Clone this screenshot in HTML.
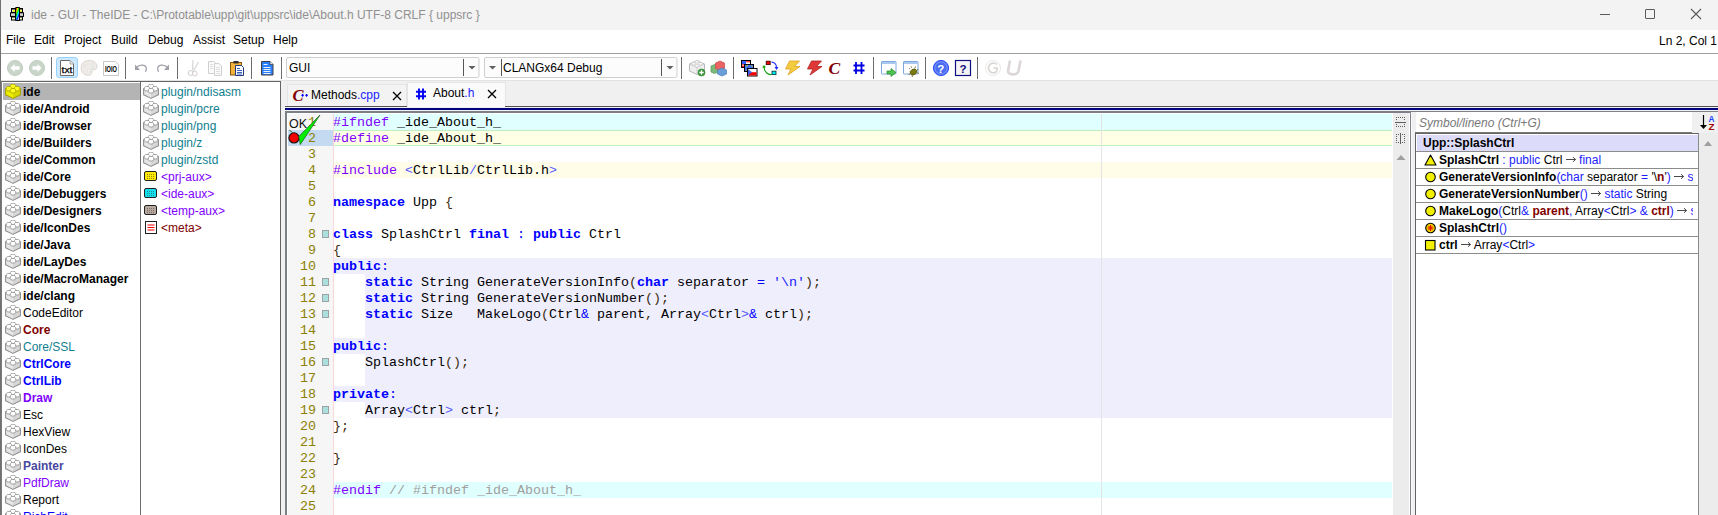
<!DOCTYPE html>
<html><head><meta charset="utf-8">
<style>
*{margin:0;padding:0;box-sizing:border-box}
html,body{width:1718px;height:515px;overflow:hidden;background:#f0f0f0;position:relative;font-family:"Liberation Sans",sans-serif;font-size:12px;color:#000}
.a{position:absolute}
.t{position:absolute;white-space:pre;line-height:16px}
#title{left:0;top:0;width:1718px;height:30px;background:#f3f3f3}
#menu{left:0;top:30px;width:1718px;height:24px;background:#fff;border-bottom:1px solid #a0a0a0}
#tb{left:0;top:54px;width:1718px;height:27px;background:#fff;border-bottom:1px solid #e3e3e3}
.sep{position:absolute;top:57px;width:1px;height:22px;background:#6e6e6e}
.mi{position:absolute;top:32px;color:#000;font-size:12px;line-height:16px}
#lp{left:0;top:81px;width:281px;height:434px;background:#fff;border-top:1px solid #646464;border-right:1px solid #646464}
.li{position:absolute;height:17px;line-height:17px;white-space:pre;font-size:12px;margin-top:1px}
.code{position:absolute;margin-top:1px;margin-left:-1px;font-family:"Liberation Mono",monospace;font-size:13.33px;line-height:16px;white-space:pre}
.ln{position:absolute;margin-top:1px;left:288px;width:28px;text-align:right;font-family:"Liberation Mono",monospace;font-size:13.33px;line-height:16px;color:#8c8000}
.kw{color:#0000ff;font-weight:bold}
.pp{color:#8000ff}
.br{color:#3a2a10}
.cm{color:#a0a0a0}
.op{color:#0000ff}
.str{color:#1818ff}
.ang{color:#5a5aff}
.mk{position:absolute;left:322px;width:7px;height:8px;background:#a8e0e0;border:1px solid #a0a0a0}
</style></head><body>
<div class="a" style="left:0;top:0;width:1px;height:515px;background:#707070;z-index:50"></div>
<div class="a" style="left:1px;top:81px;width:1px;height:434px;background:#7a7a7a;z-index:50"></div>
<div id="title" class="a">
  <svg class="a" style="left:6px;top:4px" width="24" height="22" viewBox="6 4 24 22">
<defs><linearGradient id="rb" x1="0" y1="0" x2="0.6" y2="1"><stop offset="0" stop-color="#ff0000"/><stop offset="0.25" stop-color="#ffff00"/><stop offset="0.45" stop-color="#00e000"/><stop offset="0.65" stop-color="#00ffff"/><stop offset="0.85" stop-color="#0000ff"/><stop offset="1" stop-color="#c0c0ff"/></linearGradient></defs>
<rect x="11" y="8" width="12" height="12.5" fill="#000"/>
<rect x="10" y="12.3" width="14" height="4.6" fill="#000"/>
<rect x="12" y="9.5" width="3" height="2.3" fill="#f8f8c0"/><rect x="19.5" y="9.5" width="2.5" height="2.3" fill="#f8f8c0"/>
<rect x="13" y="10" width="2" height="1.5" fill="#ffff00"/><rect x="20" y="10" width="1.5" height="1.5" fill="#ffff00"/>
<rect x="11" y="13.3" width="4" height="2.6" fill="#d4d4d4"/><rect x="19.5" y="13.3" width="3.5" height="2.6" fill="#d4d4d4"/>
<rect x="12" y="17.5" width="3" height="2" fill="#f8f8c0"/><rect x="19.5" y="17.5" width="2.5" height="2" fill="#f8f8c0"/>
<rect x="15.2" y="7" width="4.8" height="14" rx="0.8" fill="#000"/>
<rect x="16.2" y="8" width="2.8" height="12" fill="url(#rb)"/>
</svg>
  <div class="t" style="left:31px;top:7px;color:#909090;font-size:12px;line-height:16px">ide - GUI - TheIDE - C:\Prototable\upp\git\uppsrc\ide\About.h UTF-8 CRLF { uppsrc }</div>
  <div class="a" style="left:1600px;top:14px;width:10px;height:1px;background:#5a5a5a"></div>
  <div class="a" style="left:1645px;top:9px;width:10px;height:10px;border:1px solid #5a5a5a;border-radius:1px"></div>
  <svg class="a" style="left:1690px;top:8px" width="12" height="12" viewBox="0 0 12 12"><path d="M1 1L11 11M11 1L1 11" stroke="#5a5a5a" stroke-width="1.1"/></svg>
</div>
<div id="menu" class="a">
</div>
<div class="mi" style="left:6px">File</div>
<div class="mi" style="left:34px">Edit</div>
<div class="mi" style="left:64px">Project</div>
<div class="mi" style="left:111px">Build</div>
<div class="mi" style="left:148px">Debug</div>
<div class="mi" style="left:193px">Assist</div>
<div class="mi" style="left:233px">Setup</div>
<div class="mi" style="left:273px">Help</div>
<div class="mi" style="left:1659px;top:33px;white-space:pre">Ln 2, Col 1</div>

<div id="tb" class="a"></div>
<svg class="a" style="left:0;top:54px" width="1030" height="27" viewBox="0 54 1030 27">
<!-- back/forward -->
<circle cx="15" cy="68" r="7.6" fill="#c9d5c9" stroke="#b9c6b9" stroke-width="0.8"/>
<path d="M10.5 68 L14.5 64 L14.5 66.3 L19.5 66.3 L19.5 69.7 L14.5 69.7 L14.5 72 Z" fill="#fff"/>
<circle cx="37" cy="68" r="7.6" fill="#c9d5c9" stroke="#b9c6b9" stroke-width="0.8"/>
<path d="M41.5 68 L37.5 64 L37.5 66.3 L32.5 66.3 L32.5 69.7 L37.5 69.7 L37.5 72 Z" fill="#fff"/>
<!-- seps -->
<g fill="#6c6c6c">
<rect x="51" y="57" width="1" height="22"/><rect x="125" y="57" width="1" height="22"/>
<rect x="177" y="57" width="1" height="22"/><rect x="251" y="57" width="1" height="22"/>
<rect x="281" y="57" width="1" height="22"/><rect x="681" y="57" width="1" height="22"/>
<rect x="733" y="57" width="1" height="22"/><rect x="873" y="57" width="1" height="22"/>
<rect x="925" y="57" width="1" height="22"/><rect x="977" y="57" width="1" height="22"/>
</g>
<!-- txt highlighted -->
<rect x="56.5" y="57.5" width="21" height="20" rx="2.5" fill="#cce8ff" stroke="#99d1ff"/>
<path d="M60.5 60.5 H70 L73.5 64 V75.5 H60.5 Z" fill="#fff" stroke="#6a6a6a"/>
<path d="M70 60.5 V64 H73.5" fill="#e8e8e8" stroke="#9a9a9a" stroke-width="0.8"/><text x="61.5" y="73" font-family="Liberation Sans" font-size="9" fill="#000" textLength="11" lengthAdjust="spacingAndGlyphs" stroke="#000" stroke-width="0.25">txt</text>
<!-- palette faded -->
<path d="M89 60.5 C94.5 60.5 97.5 63.5 97 67.5 C96.5 70 94 69.5 92.5 70 C91 70.8 92.5 73 91 74.5 C89.5 76 85 75.5 82.8 73 C80.5 70.5 80.5 64 84 62 C85.5 61 87 60.5 89 60.5 Z" fill="#eeebe8" stroke="#dcd8d4"/>
<circle cx="84.5" cy="66" r="1.2" fill="none" stroke="#eadcdc" stroke-width="0.6"/>
<circle cx="88" cy="63.5" r="1.2" fill="none" stroke="#ebe8d8" stroke-width="0.6"/>
<circle cx="92.5" cy="64.5" r="1.2" fill="none" stroke="#d8e8dc" stroke-width="0.6"/>
<circle cx="92.5" cy="68" r="1.2" fill="none" stroke="#d4e0ea" stroke-width="0.6"/>
<circle cx="88.5" cy="70.5" r="1.3" fill="#fff" stroke="#d0ccc8" stroke-width="0.5"/>
<!-- 1010 doc -->
<path d="M103.5 61.5 H115.5 L118.5 64.5 V75.5 H103.5 Z" fill="#fff" stroke="#c8c8c8"/>
<text x="105" y="71.5" font-family="Liberation Sans" font-size="8.5" font-weight="bold" fill="#000" textLength="12" lengthAdjust="spacingAndGlyphs">IOIO</text>
<!-- undo/redo -->
<path d="M136.5 67.5 C139 64.5 146 64 146.3 68.5 C146.5 70.5 145.5 71.2 145.5 71.8" fill="none" stroke="#9fa0a8" stroke-width="1.3"/>
<path d="M135 64.5 L135 70 L140 70 Z" fill="#9fa0a8"/>
<path d="M167.5 67.5 C165 64.5 158 64 157.7 68.5 C157.5 70.5 158.5 71.2 158.5 71.8" fill="none" stroke="#9fa0a8" stroke-width="1.3"/>
<path d="M169 64.5 L169 70 L164 70 Z" fill="#9fa0a8"/>
<!-- scissors faded -->
<path d="M193 60 L192.5 70.5 M198.5 62 L193.5 70.5" stroke="#d8d8d8" stroke-width="1.3"/>
<ellipse cx="190.5" cy="73" rx="2.3" ry="2.5" fill="none" stroke="#d6cccc" stroke-width="1"/>
<ellipse cx="194.8" cy="73.5" rx="2.3" ry="2.5" fill="none" stroke="#d6cccc" stroke-width="1"/>
<!-- copy faded -->
<path d="M208.5 61.5 H214 L215.5 63 V73.5 H208.5 Z" fill="#fafafa" stroke="#d0d0d0"/>
<path d="M214.5 63.5 H219 L221.5 66 V75.5 H214.5 Z" fill="#fafafa" stroke="#d0d0d0"/>
<g stroke="#d8d8d8" stroke-width="0.8"><path d="M210 64.5h3M210 66.5h3M210 68.5h3M216 67.5h4M216 69.5h4M216 71.5h4M216 73.5h4"/></g>
<!-- paste -->
<rect x="230.5" y="62.5" width="11" height="12.5" fill="#f2b23c" stroke="#8a5a10"/>
<rect x="233.5" y="61" width="5" height="2.5" fill="#303030"/>
<path d="M235.5 65.5 H241.5 L243.5 67.5 V75.5 H235.5 Z" fill="#fff" stroke="#203880"/>
<g stroke="#2050b0" stroke-width="0.9"><path d="M237 68.5h3M237 70.5h5M237 72.5h5M237 74h5"/></g>
<!-- blue doc -->
<path d="M261.5 61.5 H270 L273 64.5 V75 H261.5 Z" fill="#2a7fff" stroke="#404040"/>
<path d="M270 61.5 V64.5 H273" fill="#fff" stroke="#404040" stroke-width="0.8"/>
<g stroke="#fff" stroke-width="0.9"><path d="M263.5 64.5h4M263.5 67.5h7M263.5 69.5h7M263.5 71.5h7M263.5 73.5h7"/></g>

<!-- combo GUI -->
<rect x="286.5" y="57.5" width="192.5" height="20" rx="1.5" fill="#fcfcfc" stroke="#cfcfcf"/>
<rect x="463" y="59" width="1" height="17" fill="#555"/>
<path d="M468.5 66 L475.5 66 L472 69.5 Z" fill="#606060"/>
<!-- combo CLANG -->
<rect x="484.5" y="57.5" width="192.5" height="20" rx="1.5" fill="#fcfcfc" stroke="#cfcfcf"/>
<rect x="501" y="59" width="1" height="17" fill="#555"/>
<path d="M489 66 L496 66 L492.5 69.5 Z" fill="#606060"/>
<rect x="661" y="59" width="1" height="17" fill="#555"/>
<path d="M666.5 66 L673.5 66 L670 69.5 Z" fill="#606060"/>
</svg>
<div class="t" style="left:289px;top:60px;font-size:12px">GUI</div>
<div class="t" style="left:503px;top:60px;font-size:12px">CLANGx64 Debug</div>


<svg class="a" style="left:680px;top:54px" width="350" height="27" viewBox="680 54 350 27">
<!-- gray brick + plus -->
<path d="M689.5 64 L697 60.5 L704.5 64 L704.5 71 L697 74.5 L689.5 71 Z" fill="#efefef" stroke="#b8b8b8"/>
<path d="M689.5 64 L697 67.5 L704.5 64 M697 67.5 V74.5" fill="none" stroke="#c8c8c8" stroke-width="0.8"/>
<ellipse cx="697" cy="61.8" rx="2" ry="1.2" fill="#fff" stroke="#c0c0c0" stroke-width="0.6"/>
<ellipse cx="693.5" cy="63.8" rx="2" ry="1.2" fill="#fff" stroke="#c0c0c0" stroke-width="0.6"/>
<ellipse cx="700.5" cy="63.8" rx="2" ry="1.2" fill="#fff" stroke="#c0c0c0" stroke-width="0.6"/>
<ellipse cx="697" cy="65.8" rx="2" ry="1.2" fill="#fff" stroke="#c0c0c0" stroke-width="0.6"/>
<circle cx="701.5" cy="72.5" r="3.5" fill="#3a9a3a" stroke="#2a7a2a" stroke-width="0.6"/>
<path d="M699.3 72.5h4.4M701.5 70.3v4.4" stroke="#fff" stroke-width="1.3"/>
<!-- colored bricks -->
<path d="M711 66 L714.5 64.5 L718 66 L718 72 L714.5 73.5 L711 72 Z" fill="#7cba7c" stroke="#5a9a5a" stroke-width="0.7"/>
<path d="M715.5 63 L720 61 L724.5 63 L724.5 68.5 L720 70.5 L715.5 68.5 Z" fill="#ea6464" stroke="#c84848" stroke-width="0.7"/>
<path d="M717.5 70 L722 68 L726.5 70 L726.5 74 L722 76 L717.5 74 Z" fill="#6a9ed8" stroke="#4a7eb8" stroke-width="0.7"/>
<!-- flags -->
<rect x="741.5" y="60.5" width="9" height="7" fill="#fff" stroke="#000"/>
<rect x="742" y="61" width="4" height="3" fill="#3060ff"/>
<path d="M746 61.8h4M742 64.8h8M742 66.5h8" stroke="#f00000" stroke-width="1"/>
<rect x="744.5" y="64.5" width="9" height="7" fill="#4070f0" stroke="#000"/>
<path d="M746 66 L748 65.5 M751 65.5 L752.5 66.5 M746 70 L747.5 70.8 M752 70.5 L753 69.5" stroke="#e0e000" stroke-width="0.8"/>
<rect x="747.5" y="68.5" width="9.5" height="7.5" fill="#fff" stroke="#000"/>
<rect x="748" y="72.2" width="8.5" height="3.3" fill="#f00000"/>
<path d="M748 69 L752 72.2 L748 75.5 Z" fill="#4060e0"/>
<!-- sync -->
<path d="M771.5 62.2 C774.5 62 776.5 64.5 776.5 67.5" fill="none" stroke="#2030ff" stroke-width="1.2"/>
<path d="M774.5 67 L778.5 67 L776.5 70 Z" fill="#2030ff"/>
<path d="M771.5 74.5 C768 74.8 764 72 764 67" fill="none" stroke="#10a010" stroke-width="1.2"/>
<path d="M762 67.5 L766 67.5 L764 65 Z" fill="#10a010"/>
<rect x="766.2" y="61.2" width="4" height="3.4" fill="#f00000" stroke="#300000" stroke-width="0.8"/>
<rect x="772" y="71.2" width="4" height="3.4" fill="#00f0f0" stroke="#003030" stroke-width="0.8"/>
<!-- yellow lightning -->
<path d="M789.5 61 L799.5 61 L794.5 66.5 L800 66.5 L788 75 L791 69 L785.5 69 Z" fill="#f4cc40" stroke="#e0a020" stroke-width="0.8"/>
<!-- red lightning -->
<path d="M811.5 61 L821.5 61 L816.5 66.5 L822 66.5 L810 75 L813 69 L807.5 69 Z" fill="#e03838" stroke="#b02020" stroke-width="0.8"/>
<!-- C -->
<text x="828.5" y="73.6" font-family="Liberation Serif" font-style="italic" font-weight="bold" font-size="17.5" fill="#800000">C</text>
<!-- # -->
<path d="M856 62v12M861.5 62v12M853.5 65.5h11M853.5 70.5h11" stroke="#0000e0" stroke-width="1.8"/>
<!-- window + arrow -->
<rect x="881.5" y="61.5" width="14.5" height="12.5" rx="0.5" fill="#fff" stroke="#80a8e0"/>
<rect x="882" y="62" width="13.5" height="2" fill="#a8c8f0"/>
<path d="M887 71h4v-2.5l5 4 -5 4v-2.5h-4z" fill="#50c050" stroke="#209020" stroke-width="0.7"/>
<!-- window + bug -->
<rect x="903.5" y="61.5" width="14.5" height="12.5" rx="0.5" fill="#fff" stroke="#80a8e0"/>
<rect x="904" y="62" width="13.5" height="2" fill="#a8c8f0"/>
<ellipse cx="913.5" cy="72" rx="3.5" ry="2.8" transform="rotate(-30 913.5 72)" fill="#7a7a10" stroke="#4a4a00" stroke-width="0.6"/>
<path d="M910 69l-1-1M911.5 67.8l-0.5-1.5M915 68l0.5-1.5M917 70l1.5-0.5M917.5 73l1.5 0.5M912 75.5l0.5 1.5M910 74l-1.5 0.5" stroke="#4a4a00" stroke-width="0.7"/>
<!-- help circle -->
<circle cx="941" cy="68" r="7.6" fill="#4a6cf0" stroke="#1a3cff" stroke-width="0.9"/>
<circle cx="941" cy="68" r="6.2" fill="none" stroke="#fff" stroke-width="0.5" opacity="0.6"/>
<text x="937.2" y="72.5" font-family="Liberation Sans" font-weight="bold" font-size="11.5" fill="#fff">?</text>
<!-- help square -->
<rect x="955.5" y="60.5" width="15" height="15" fill="#f4f4f4" stroke="#101080" stroke-width="1.2"/>
<text x="959.5" y="73" font-family="Liberation Sans" font-weight="bold" font-size="11.5" fill="#101080">?</text>
<!-- G faded -->
<circle cx="993" cy="68" r="7.5" fill="#fff" stroke="#e8e8e8"/>
<path d="M997 64.5 C994.5 62 989 62.5 988.5 67.5 C988.3 72 993 74 996 72 L997 70 L997 68 L993.5 68" fill="none" stroke="#d8d4d0" stroke-width="1.6"/>
<!-- U faded -->
<path d="M1010 60.5 L1008 71 C1007.5 75 1017 76 1018.5 71 L1020.5 60.5" fill="none" stroke="#ddd6d6" stroke-width="2.6"/>
</svg>

<div id="lp" class="a"></div>
<svg width="0" height="0" style="position:absolute"><defs>
<symbol id="brk" viewBox="0 0 16 15">
<path d="M0.6 4.8 L8 1.4 L15.4 4.8 L15.4 10.8 L8 14.4 L0.6 10.8 Z" fill="var(--f1)"/>
<path d="M8 8.6 L15.4 4.8 L15.4 10.8 L8 14.4 Z" fill="var(--f3)"/>
<path d="M0.6 4.8 L8 1.4 L15.4 4.8 L15.4 10.8 L8 14.4 L0.6 10.8 Z" fill="none" stroke="var(--s)" stroke-width="1.05" stroke-linejoin="round"/>
<g stroke="var(--s)" stroke-width="0.75">
<path d="M5.3 1.6 v2 a2.7 1.3 0 0 0 5.4 0 v-2 a2.7 1.3 0 0 0 -5.4 0 Z" fill="var(--st)"/>
<path d="M1.3 3.8 v2 a2.7 1.3 0 0 0 5.4 0 v-2 a2.7 1.3 0 0 0 -5.4 0 Z" fill="var(--st)"/>
<path d="M9.3 3.8 v2 a2.7 1.3 0 0 0 5.4 0 v-2 a2.7 1.3 0 0 0 -5.4 0 Z" fill="var(--st)"/>
<path d="M5.3 5.8 v2 a2.7 1.3 0 0 0 5.4 0 v-2 a2.7 1.3 0 0 0 -5.4 0 Z" fill="var(--st)"/>
</g>
<g fill="var(--st)"><ellipse cx="8" cy="1.6" rx="2.3" ry="0.9"/><ellipse cx="4" cy="3.8" rx="2.3" ry="0.9"/><ellipse cx="12" cy="3.8" rx="2.3" ry="0.9"/><ellipse cx="8" cy="5.8" rx="2.3" ry="0.9"/></g>
</symbol></defs></svg>
<div class="a" style="left:3px;top:83px;width:137px;height:17px;background:#b4b4b4"></div>
<div class="a" style="left:140px;top:82px;width:1px;height:433px;background:#6e6e6e"></div>
<svg class="a" style="left:5px;top:84px;--f1:#eeee00;--f2:#f6f600;--f3:#d8d800;--s:#a8a000;--s2:#c8c000;--st:#fbfb20" width="16" height="15"><use href="#brk"/></svg>
<div class="li" style="left:23px;top:83px;color:#000;font-weight:bold">ide</div>
<svg class="a" style="left:5px;top:101px;--f1:#e6e6e6;--f2:#f4f4f4;--f3:#d6d6d6;--s:#8c8c8c;--s2:#c4c4c4;--st:#fdfdfd" width="16" height="15"><use href="#brk"/></svg>
<div class="li" style="left:23px;top:100px;color:#000;font-weight:bold">ide/Android</div>
<svg class="a" style="left:5px;top:118px;--f1:#e6e6e6;--f2:#f4f4f4;--f3:#d6d6d6;--s:#8c8c8c;--s2:#c4c4c4;--st:#fdfdfd" width="16" height="15"><use href="#brk"/></svg>
<div class="li" style="left:23px;top:117px;color:#000;font-weight:bold">ide/Browser</div>
<svg class="a" style="left:5px;top:135px;--f1:#e6e6e6;--f2:#f4f4f4;--f3:#d6d6d6;--s:#8c8c8c;--s2:#c4c4c4;--st:#fdfdfd" width="16" height="15"><use href="#brk"/></svg>
<div class="li" style="left:23px;top:134px;color:#000;font-weight:bold">ide/Builders</div>
<svg class="a" style="left:5px;top:152px;--f1:#e6e6e6;--f2:#f4f4f4;--f3:#d6d6d6;--s:#8c8c8c;--s2:#c4c4c4;--st:#fdfdfd" width="16" height="15"><use href="#brk"/></svg>
<div class="li" style="left:23px;top:151px;color:#000;font-weight:bold">ide/Common</div>
<svg class="a" style="left:5px;top:169px;--f1:#e6e6e6;--f2:#f4f4f4;--f3:#d6d6d6;--s:#8c8c8c;--s2:#c4c4c4;--st:#fdfdfd" width="16" height="15"><use href="#brk"/></svg>
<div class="li" style="left:23px;top:168px;color:#000;font-weight:bold">ide/Core</div>
<svg class="a" style="left:5px;top:186px;--f1:#e6e6e6;--f2:#f4f4f4;--f3:#d6d6d6;--s:#8c8c8c;--s2:#c4c4c4;--st:#fdfdfd" width="16" height="15"><use href="#brk"/></svg>
<div class="li" style="left:23px;top:185px;color:#000;font-weight:bold">ide/Debuggers</div>
<svg class="a" style="left:5px;top:203px;--f1:#e6e6e6;--f2:#f4f4f4;--f3:#d6d6d6;--s:#8c8c8c;--s2:#c4c4c4;--st:#fdfdfd" width="16" height="15"><use href="#brk"/></svg>
<div class="li" style="left:23px;top:202px;color:#000;font-weight:bold">ide/Designers</div>
<svg class="a" style="left:5px;top:220px;--f1:#e6e6e6;--f2:#f4f4f4;--f3:#d6d6d6;--s:#8c8c8c;--s2:#c4c4c4;--st:#fdfdfd" width="16" height="15"><use href="#brk"/></svg>
<div class="li" style="left:23px;top:219px;color:#000;font-weight:bold">ide/IconDes</div>
<svg class="a" style="left:5px;top:237px;--f1:#e6e6e6;--f2:#f4f4f4;--f3:#d6d6d6;--s:#8c8c8c;--s2:#c4c4c4;--st:#fdfdfd" width="16" height="15"><use href="#brk"/></svg>
<div class="li" style="left:23px;top:236px;color:#000;font-weight:bold">ide/Java</div>
<svg class="a" style="left:5px;top:254px;--f1:#e6e6e6;--f2:#f4f4f4;--f3:#d6d6d6;--s:#8c8c8c;--s2:#c4c4c4;--st:#fdfdfd" width="16" height="15"><use href="#brk"/></svg>
<div class="li" style="left:23px;top:253px;color:#000;font-weight:bold">ide/LayDes</div>
<svg class="a" style="left:5px;top:271px;--f1:#e6e6e6;--f2:#f4f4f4;--f3:#d6d6d6;--s:#8c8c8c;--s2:#c4c4c4;--st:#fdfdfd" width="16" height="15"><use href="#brk"/></svg>
<div class="li" style="left:23px;top:270px;color:#000;font-weight:bold">ide/MacroManager</div>
<svg class="a" style="left:5px;top:288px;--f1:#e6e6e6;--f2:#f4f4f4;--f3:#d6d6d6;--s:#8c8c8c;--s2:#c4c4c4;--st:#fdfdfd" width="16" height="15"><use href="#brk"/></svg>
<div class="li" style="left:23px;top:287px;color:#000;font-weight:bold">ide/clang</div>
<svg class="a" style="left:5px;top:305px;--f1:#e6e6e6;--f2:#f4f4f4;--f3:#d6d6d6;--s:#8c8c8c;--s2:#c4c4c4;--st:#fdfdfd" width="16" height="15"><use href="#brk"/></svg>
<div class="li" style="left:23px;top:304px;color:#000;font-weight:normal">CodeEditor</div>
<svg class="a" style="left:5px;top:322px;--f1:#e6e6e6;--f2:#f4f4f4;--f3:#d6d6d6;--s:#8c8c8c;--s2:#c4c4c4;--st:#fdfdfd" width="16" height="15"><use href="#brk"/></svg>
<div class="li" style="left:23px;top:321px;color:#800000;font-weight:bold">Core</div>
<svg class="a" style="left:5px;top:339px;--f1:#e6e6e6;--f2:#f4f4f4;--f3:#d6d6d6;--s:#8c8c8c;--s2:#c4c4c4;--st:#fdfdfd" width="16" height="15"><use href="#brk"/></svg>
<div class="li" style="left:23px;top:338px;color:#108090;font-weight:normal">Core/SSL</div>
<svg class="a" style="left:5px;top:356px;--f1:#e6e6e6;--f2:#f4f4f4;--f3:#d6d6d6;--s:#8c8c8c;--s2:#c4c4c4;--st:#fdfdfd" width="16" height="15"><use href="#brk"/></svg>
<div class="li" style="left:23px;top:355px;color:#0000ff;font-weight:bold">CtrlCore</div>
<svg class="a" style="left:5px;top:373px;--f1:#e6e6e6;--f2:#f4f4f4;--f3:#d6d6d6;--s:#8c8c8c;--s2:#c4c4c4;--st:#fdfdfd" width="16" height="15"><use href="#brk"/></svg>
<div class="li" style="left:23px;top:372px;color:#0000ff;font-weight:bold">CtrlLib</div>
<svg class="a" style="left:5px;top:390px;--f1:#e6e6e6;--f2:#f4f4f4;--f3:#d6d6d6;--s:#8c8c8c;--s2:#c4c4c4;--st:#fdfdfd" width="16" height="15"><use href="#brk"/></svg>
<div class="li" style="left:23px;top:389px;color:#8000ff;font-weight:bold">Draw</div>
<svg class="a" style="left:5px;top:407px;--f1:#e6e6e6;--f2:#f4f4f4;--f3:#d6d6d6;--s:#8c8c8c;--s2:#c4c4c4;--st:#fdfdfd" width="16" height="15"><use href="#brk"/></svg>
<div class="li" style="left:23px;top:406px;color:#000;font-weight:normal">Esc</div>
<svg class="a" style="left:5px;top:424px;--f1:#e6e6e6;--f2:#f4f4f4;--f3:#d6d6d6;--s:#8c8c8c;--s2:#c4c4c4;--st:#fdfdfd" width="16" height="15"><use href="#brk"/></svg>
<div class="li" style="left:23px;top:423px;color:#000;font-weight:normal">HexView</div>
<svg class="a" style="left:5px;top:441px;--f1:#e6e6e6;--f2:#f4f4f4;--f3:#d6d6d6;--s:#8c8c8c;--s2:#c4c4c4;--st:#fdfdfd" width="16" height="15"><use href="#brk"/></svg>
<div class="li" style="left:23px;top:440px;color:#000;font-weight:normal">IconDes</div>
<svg class="a" style="left:5px;top:458px;--f1:#e6e6e6;--f2:#f4f4f4;--f3:#d6d6d6;--s:#8c8c8c;--s2:#c4c4c4;--st:#fdfdfd" width="16" height="15"><use href="#brk"/></svg>
<div class="li" style="left:23px;top:457px;color:#4848a0;font-weight:bold">Painter</div>
<svg class="a" style="left:5px;top:475px;--f1:#e6e6e6;--f2:#f4f4f4;--f3:#d6d6d6;--s:#8c8c8c;--s2:#c4c4c4;--st:#fdfdfd" width="16" height="15"><use href="#brk"/></svg>
<div class="li" style="left:23px;top:474px;color:#8000ff;font-weight:normal">PdfDraw</div>
<svg class="a" style="left:5px;top:492px;--f1:#e6e6e6;--f2:#f4f4f4;--f3:#d6d6d6;--s:#8c8c8c;--s2:#c4c4c4;--st:#fdfdfd" width="16" height="15"><use href="#brk"/></svg>
<div class="li" style="left:23px;top:491px;color:#000;font-weight:normal">Report</div>
<svg class="a" style="left:5px;top:509px;--f1:#e6e6e6;--f2:#f4f4f4;--f3:#d6d6d6;--s:#8c8c8c;--s2:#c4c4c4;--st:#fdfdfd" width="16" height="15"><use href="#brk"/></svg>
<div class="li" style="left:23px;top:508px;color:#0000ff;font-weight:normal">RichEdit</div>
<svg class="a" style="left:143px;top:84px;--f1:#e6e6e6;--f2:#f4f4f4;--f3:#d6d6d6;--s:#8c8c8c;--s2:#c4c4c4;--st:#fdfdfd" width="16" height="15"><use href="#brk"/></svg>
<div class="li" style="left:161px;top:83px;color:#108090">plugin/ndisasm</div>
<svg class="a" style="left:143px;top:101px;--f1:#e6e6e6;--f2:#f4f4f4;--f3:#d6d6d6;--s:#8c8c8c;--s2:#c4c4c4;--st:#fdfdfd" width="16" height="15"><use href="#brk"/></svg>
<div class="li" style="left:161px;top:100px;color:#108090">plugin/pcre</div>
<svg class="a" style="left:143px;top:118px;--f1:#e6e6e6;--f2:#f4f4f4;--f3:#d6d6d6;--s:#8c8c8c;--s2:#c4c4c4;--st:#fdfdfd" width="16" height="15"><use href="#brk"/></svg>
<div class="li" style="left:161px;top:117px;color:#108090">plugin/png</div>
<svg class="a" style="left:143px;top:135px;--f1:#e6e6e6;--f2:#f4f4f4;--f3:#d6d6d6;--s:#8c8c8c;--s2:#c4c4c4;--st:#fdfdfd" width="16" height="15"><use href="#brk"/></svg>
<div class="li" style="left:161px;top:134px;color:#108090">plugin/z</div>
<svg class="a" style="left:143px;top:152px;--f1:#e6e6e6;--f2:#f4f4f4;--f3:#d6d6d6;--s:#8c8c8c;--s2:#c4c4c4;--st:#fdfdfd" width="16" height="15"><use href="#brk"/></svg>
<div class="li" style="left:161px;top:151px;color:#108090">plugin/zstd</div>
<svg class="a" style="left:144px;top:171px" width="13" height="11" viewBox="0 0 13 11"><rect x="0.5" y="0.5" width="12" height="9" rx="1.5" fill="#ffe800" stroke="#202020"/><g fill="#404040" opacity="0.55"><rect x="3" y="3" width="1" height="1"/><rect x="5" y="3" width="1" height="1"/><rect x="7" y="3" width="1" height="1"/><rect x="9" y="3" width="1" height="1"/><rect x="3" y="5" width="1" height="1"/><rect x="5" y="5" width="1" height="1"/><rect x="7" y="5" width="1" height="1"/><rect x="9" y="5" width="1" height="1"/><rect x="3" y="7" width="1" height="1"/><rect x="5" y="7" width="1" height="1"/><rect x="7" y="7" width="1" height="1"/><rect x="9" y="7" width="1" height="1"/></g></svg>
<div class="li" style="left:161px;top:168px;color:#8000ff">&lt;prj-aux&gt;</div>
<svg class="a" style="left:144px;top:188px" width="13" height="11" viewBox="0 0 13 11"><rect x="0.5" y="0.5" width="12" height="9" rx="1.5" fill="#10e0f0" stroke="#202020"/><g fill="#404040" opacity="0.55"><rect x="3" y="3" width="1" height="1"/><rect x="5" y="3" width="1" height="1"/><rect x="7" y="3" width="1" height="1"/><rect x="9" y="3" width="1" height="1"/><rect x="3" y="5" width="1" height="1"/><rect x="5" y="5" width="1" height="1"/><rect x="7" y="5" width="1" height="1"/><rect x="9" y="5" width="1" height="1"/><rect x="3" y="7" width="1" height="1"/><rect x="5" y="7" width="1" height="1"/><rect x="7" y="7" width="1" height="1"/><rect x="9" y="7" width="1" height="1"/></g></svg>
<div class="li" style="left:161px;top:185px;color:#8000ff">&lt;ide-aux&gt;</div>
<svg class="a" style="left:144px;top:205px" width="13" height="11" viewBox="0 0 13 11"><rect x="0.5" y="0.5" width="12" height="9" rx="1.5" fill="#b8a8a0" stroke="#202020"/><g fill="#404040" opacity="0.55"><rect x="3" y="3" width="1" height="1"/><rect x="5" y="3" width="1" height="1"/><rect x="7" y="3" width="1" height="1"/><rect x="9" y="3" width="1" height="1"/><rect x="3" y="5" width="1" height="1"/><rect x="5" y="5" width="1" height="1"/><rect x="7" y="5" width="1" height="1"/><rect x="9" y="5" width="1" height="1"/><rect x="3" y="7" width="1" height="1"/><rect x="5" y="7" width="1" height="1"/><rect x="7" y="7" width="1" height="1"/><rect x="9" y="7" width="1" height="1"/></g></svg>
<div class="li" style="left:161px;top:202px;color:#8000ff">&lt;temp-aux&gt;</div>
<svg class="a" style="left:145px;top:221px" width="12" height="13" viewBox="0 0 12 13"><rect x="0.5" y="0.5" width="11" height="12" fill="#fff" stroke="#202020"/><path d="M2.5 4h7M2.5 6.5h7M2.5 9h7" stroke="#f00000" stroke-width="1.2"/></svg>
<div class="li" style="left:161px;top:219px;color:#800000">&lt;meta&gt;</div>

<div class="a" style="left:287px;top:84px;width:120px;height:22px;background:#f3f3f3;border:1px solid #e4e4e4;border-bottom:none"></div>
<div class="a" style="left:407px;top:82px;width:99px;height:25px;background:#fafafa;border:1px solid #e4e4e4;border-bottom:none"></div>
<div class="a" style="left:285px;top:106px;width:122px;height:1px;background:#505050"></div>
<div class="a" style="left:505px;top:106px;width:1213px;height:1px;background:#505050"></div>
<div class="a" style="left:285px;top:108px;width:1433px;height:2px;background:#000080"></div>
<svg class="a" style="left:291px;top:86px" width="20" height="18" viewBox="0 0 20 18"><text x="1.5" y="14.8" font-family="Liberation Serif" font-style="italic" font-weight="bold" font-size="16.5" fill="#800000">C</text><path d="M10.2 9.3h2.8M11.6 7.9v2.8M14.2 9.3h2.8M15.6 7.9v2.8" stroke="#0000ff" stroke-width="1.1"/></svg>
<div class="t" style="left:311px;top:87px">Methods<span style="color:#2020ff">.cpp</span></div>
<svg class="a" style="left:392px;top:91px" width="10" height="10" viewBox="0 0 10 10"><path d="M1 1L9 9M9 1L1 9" stroke="#000" stroke-width="1.3"/></svg>
<svg class="a" style="left:415px;top:87px" width="12" height="14" viewBox="0 0 12 14"><path d="M4 1.5v11M8 1.5v11M1 4.8h10M1 9.2h10" stroke="#0000f0" stroke-width="1.9"/></svg>
<div class="t" style="left:433px;top:85px">About<span style="color:#2020ff">.h</span></div>
<svg class="a" style="left:487px;top:89px" width="10" height="10" viewBox="0 0 10 10"><path d="M1 1L9 9M9 1L1 9" stroke="#000" stroke-width="1.3"/></svg>
<div class="a" style="left:285px;top:111px;width:1126px;height:404px;background:#fff;border-top:2px solid #7c7f86;border-left:2px solid #7c7f86;border-right:1px solid #7c7f86"></div>
<div class="a" style="left:288px;top:114px;width:45px;height:401px;background:#f6f6f6"></div>
<div class="a" style="left:333px;top:114px;width:1px;height:401px;background:#f8d8d8"></div>
<div class="a" style="left:1393px;top:113px;width:16px;height:402px;background:#ececec"></div>
<div class="a" style="left:334px;top:114px;width:1058px;height:16px;background:#e0ffff"></div>
<div class="a" style="left:334px;top:130px;width:1058px;height:16px;background:#ffffe6"></div>
<div class="a" style="left:334px;top:130px;width:1058px;height:1px;background:#c0f0c0"></div>
<div class="a" style="left:334px;top:145px;width:1058px;height:1px;background:#c0f0c0"></div>
<div class="a" style="left:334px;top:162px;width:1058px;height:16px;background:#fffde8"></div>
<div class="a" style="left:334px;top:482px;width:1058px;height:16px;background:#e0ffff"></div>
<div class="a" style="left:334px;top:258px;width:1058px;height:16px;background:#eeeefc"></div>
<div class="a" style="left:334px;top:338px;width:1058px;height:16px;background:#eeeefc"></div>
<div class="a" style="left:334px;top:386px;width:1058px;height:16px;background:#eeeefc"></div>
<div class="a" style="left:365px;top:274px;width:1027px;height:64px;background:#eeeefc"></div>
<div class="a" style="left:365px;top:354px;width:1027px;height:32px;background:#eeeefc"></div>
<div class="a" style="left:365px;top:402px;width:1027px;height:16px;background:#eeeefc"></div>
<div class="a" style="left:288px;top:130px;width:45px;height:16px;background:#c4daf0"></div>
<div class="a" style="left:1101px;top:114px;width:1px;height:401px;background:#e4e4e4"></div>
<div class="ln" style="top:114px">1</div>
<div class="ln" style="top:130px">2</div>
<div class="ln" style="top:146px">3</div>
<div class="ln" style="top:162px">4</div>
<div class="ln" style="top:178px">5</div>
<div class="ln" style="top:194px">6</div>
<div class="ln" style="top:210px">7</div>
<div class="ln" style="top:226px">8</div>
<div class="ln" style="top:242px">9</div>
<div class="ln" style="top:258px">10</div>
<div class="ln" style="top:274px">11</div>
<div class="ln" style="top:290px">12</div>
<div class="ln" style="top:306px">13</div>
<div class="ln" style="top:322px">14</div>
<div class="ln" style="top:338px">15</div>
<div class="ln" style="top:354px">16</div>
<div class="ln" style="top:370px">17</div>
<div class="ln" style="top:386px">18</div>
<div class="ln" style="top:402px">19</div>
<div class="ln" style="top:418px">20</div>
<div class="ln" style="top:434px">21</div>
<div class="ln" style="top:450px">22</div>
<div class="ln" style="top:466px">23</div>
<div class="ln" style="top:482px">24</div>
<div class="ln" style="top:498px">25</div>
<div class="mk" style="top:230px"></div>
<div class="mk" style="top:278px"></div>
<div class="mk" style="top:294px"></div>
<div class="mk" style="top:310px"></div>
<div class="mk" style="top:358px"></div>
<div class="mk" style="top:406px"></div>
<div class="code" style="left:334px;top:114px"><span class="pp">#ifndef</span> _ide_About_h_</div>
<div class="code" style="left:334px;top:130px"><span class="pp">#define</span> _ide_About_h_</div>
<div class="code" style="left:334px;top:162px"><span class="pp">#include</span> <span class="ang">&lt;</span>CtrlLib<span class="ang">/</span>CtrlLib.h<span class="ang">&gt;</span></div>
<div class="code" style="left:334px;top:194px"><span class="kw">namespace</span> Upp <span class="br">{</span></div>
<div class="code" style="left:334px;top:226px"><span class="kw">class</span> SplashCtrl <span class="kw">final</span> <span class="op">:</span> <span class="kw">public</span> Ctrl</div>
<div class="code" style="left:334px;top:242px"><span class="br">{</span></div>
<div class="code" style="left:334px;top:258px"><span class="kw">public</span><span class="op">:</span></div>
<div class="code" style="left:334px;top:274px">    <span class="kw">static</span> String GenerateVersionInfo<span class="br">(</span><span class="kw">char</span> separator <span class="op">=</span> <span class="str">'\n'</span><span class="br">);</span></div>
<div class="code" style="left:334px;top:290px">    <span class="kw">static</span> String GenerateVersionNumber<span class="br">();</span></div>
<div class="code" style="left:334px;top:306px">    <span class="kw">static</span> Size   MakeLogo<span class="br">(</span>Ctrl<span class="op">&amp;</span> parent<span class="br">,</span> Array<span class="ang">&lt;</span>Ctrl<span class="ang">&gt;</span><span class="op">&amp;</span> ctrl<span class="br">);</span></div>
<div class="code" style="left:334px;top:338px"><span class="kw">public</span><span class="op">:</span></div>
<div class="code" style="left:334px;top:354px">    SplashCtrl<span class="br">();</span></div>
<div class="code" style="left:334px;top:386px"><span class="kw">private</span><span class="op">:</span></div>
<div class="code" style="left:334px;top:402px">    Array<span class="ang">&lt;</span>Ctrl<span class="ang">&gt;</span> ctrl<span class="br">;</span></div>
<div class="code" style="left:334px;top:418px"><span class="br">};</span></div>
<div class="code" style="left:334px;top:450px"><span class="br">}</span></div>
<div class="code" style="left:334px;top:482px"><span class="pp">#endif</span> <span class="cm">// #ifndef _ide_About_h_</span></div>
<div class="t" style="left:289px;top:116px;font-size:12.5px;color:#101010">OK</div>
<svg class="a" style="left:286px;top:112px" width="40" height="36" viewBox="286 112 40 36"><path d="M289.3 130.2 L292.5 132.5" stroke="#205020" stroke-width="0.9"/><circle cx="294" cy="137.9" r="5.1" fill="#f00000" stroke="#101010" stroke-width="1.1"/><path d="M320 115 L298.8 136.5 L300.3 144.5 Z" fill="#00ee00" stroke="#1a5a1a" stroke-width="0.7" stroke-linejoin="round"/></svg>
<svg class="a" style="left:1393px;top:113px" width="16" height="50" viewBox="1393 113 16 50"><g fill="#606060"><rect x="1396" y="117" width="1" height="1"/><rect x="1398" y="117" width="1" height="1"/><rect x="1400" y="117" width="1" height="1"/><rect x="1402" y="117" width="1" height="1"/><rect x="1404" y="117" width="1" height="1"/><rect x="1396" y="119" width="1" height="1"/><rect x="1404" y="119" width="1" height="1"/><rect x="1395" y="122" width="11" height="1"/><rect x="1396" y="124" width="1" height="1"/><rect x="1404" y="124" width="1" height="1"/><rect x="1396" y="126" width="1" height="1"/><rect x="1398" y="126" width="1" height="1"/><rect x="1400" y="126" width="1" height="1"/><rect x="1402" y="126" width="1" height="1"/><rect x="1404" y="126" width="1" height="1"/><rect x="1396" y="134" width="1" height="1"/><rect x="1396" y="136" width="1" height="1"/><rect x="1396" y="138" width="1" height="1"/><rect x="1396" y="140" width="1" height="1"/><rect x="1396" y="142" width="1" height="1"/><rect x="1398" y="134" width="1" height="1"/><rect x="1398" y="142" width="1" height="1"/><rect x="1400" y="133" width="1" height="11"/><rect x="1402" y="134" width="1" height="1"/><rect x="1402" y="142" width="1" height="1"/><rect x="1404" y="134" width="1" height="1"/><rect x="1404" y="136" width="1" height="1"/><rect x="1404" y="138" width="1" height="1"/><rect x="1404" y="140" width="1" height="1"/><rect x="1404" y="142" width="1" height="1"/></g><path d="M1396.5 160 L1401 155 L1405.5 160 Z" fill="#a0a0a0"/></svg>
<div class="a" style="left:1410px;top:111px;width:308px;height:404px;background:#f0f0f0;border-top:1px solid #80848a;border-left:1px solid #80848a"></div>
<div class="a" style="left:1411px;top:112px;width:1px;height:403px;background:#fafafa"></div>
<div class="a" style="left:1416px;top:112px;width:276px;height:20px;background:#fff;"></div>
<div class="a" style="left:1415px;top:132px;width:277px;height:1px;background:#7a7a7a;"></div>
<div class="t" style="left:1419px;top:115px;font-style:italic;color:#787878;font-size:12px">Symbol/lineno (Ctrl+G)</div>
<svg class="a" style="left:1692px;top:112px" width="26" height="21" viewBox="1692 112 26 21"><path d="M1703.5 115v11" stroke="#000" stroke-width="1.2"/><path d="M1700 125 L1707 125 L1703.5 129 Z" fill="#000"/><text x="1708.6" y="121.5" font-family="Liberation Sans" font-weight="bold" font-size="8.8" fill="#2040ff" textLength="6" lengthAdjust="spacingAndGlyphs">A</text><text x="1708.6" y="129.6" font-family="Liberation Sans" font-weight="bold" font-size="8.8" fill="#a00000" textLength="6" lengthAdjust="spacingAndGlyphs">Z</text></svg>
<div class="a" style="left:1415px;top:133px;width:284px;height:382px;background:#fff;border-top:1px solid #646464;border-left:1px solid #646464;border-right:1px solid #8a8a8a"></div>
<div class="a" style="left:1699px;top:133px;width:19px;height:382px;background:#ececec;"></div>
<svg class="a" style="left:1699px;top:133px" width="19" height="20" viewBox="1699 133 19 20"><path d="M1704 146 L1708 141 L1712 146 Z" fill="#a0a0a0"/></svg>
<div class="a" style="left:1417px;top:135px;width:281px;height:16px;background:#dcdcfa;"></div>
<div class="a" style="left:1416px;top:151px;width:282px;height:1px;background:#8c8c8c;"></div>
<div class="a" style="left:1416px;top:168px;width:282px;height:1px;background:#8c8c8c;"></div>
<div class="a" style="left:1416px;top:185px;width:282px;height:1px;background:#8c8c8c;"></div>
<div class="a" style="left:1416px;top:202px;width:282px;height:1px;background:#8c8c8c;"></div>
<div class="a" style="left:1416px;top:219px;width:282px;height:1px;background:#8c8c8c;"></div>
<div class="a" style="left:1416px;top:236px;width:282px;height:1px;background:#8c8c8c;"></div>
<div class="a" style="left:1416px;top:253px;width:282px;height:1px;background:#8c8c8c;"></div>
<div class="t" style="left:1423px;top:135px;font-weight:bold">Upp::SplashCtrl</div>
<svg class="a" style="left:1424px;top:154px" width="13" height="12" viewBox="0 0 13 12"><path d="M6.5 1 L12 11 L1 11 Z" fill="#f0f000" stroke="#000" stroke-width="1.1" stroke-linejoin="round"/></svg>
<div class="t" style="left:1439px;top:152px;width:254px;overflow:hidden"><b>SplashCtrl</b><span style="color:#2020ff"> : public</span> Ctrl <svg width="10" height="7" style="vertical-align:1px"><path d="M0 3.5h9.5M7 1.2l2.6 2.3-2.6 2.3" stroke="#4a4a4a" fill="none" stroke-width="1"/></svg> <span style="color:#2020ff">final</span></div>
<svg class="a" style="left:1424px;top:171px" width="13" height="12" viewBox="0 0 13 12"><circle cx="6.5" cy="6" r="4.8" fill="#f0f000" stroke="#000" stroke-width="1.1"/></svg>
<div class="t" style="left:1439px;top:169px;width:254px;overflow:hidden"><b>GenerateVersionInfo</b><span style="color:#2020ff">(char</span> separator <span style="color:#2020ff">=</span> '\<b style="color:#800000">n</b>'<span style="color:#2020ff">)</span> <svg width="10" height="7" style="vertical-align:1px"><path d="M0 3.5h9.5M7 1.2l2.6 2.3-2.6 2.3" stroke="#4a4a4a" fill="none" stroke-width="1"/></svg> <span style="color:#2020ff">static</span> String</div>
<svg class="a" style="left:1424px;top:188px" width="13" height="12" viewBox="0 0 13 12"><circle cx="6.5" cy="6" r="4.8" fill="#f0f000" stroke="#000" stroke-width="1.1"/></svg>
<div class="t" style="left:1439px;top:186px;width:254px;overflow:hidden"><b>GenerateVersionNumber</b><span style="color:#2020ff">()</span> <svg width="10" height="7" style="vertical-align:1px"><path d="M0 3.5h9.5M7 1.2l2.6 2.3-2.6 2.3" stroke="#4a4a4a" fill="none" stroke-width="1"/></svg> <span style="color:#2020ff">static</span> String</div>
<svg class="a" style="left:1424px;top:205px" width="13" height="12" viewBox="0 0 13 12"><circle cx="6.5" cy="6" r="4.8" fill="#f0f000" stroke="#000" stroke-width="1.1"/></svg>
<div class="t" style="left:1439px;top:203px;width:254px;overflow:hidden"><b>MakeLogo</b><span style="color:#2020ff">(</span>Ctrl<span style="color:#2020ff">&amp;</span> <b style="color:#800000">parent</b><span style="color:#2020ff">,</span> Array<span style="color:#2020ff">&lt;</span>Ctrl<span style="color:#2020ff">&gt;</span> <span style="color:#2020ff">&amp;</span> <b style="color:#800000">ctrl</b><span style="color:#2020ff">)</span> <svg width="10" height="7" style="vertical-align:1px"><path d="M0 3.5h9.5M7 1.2l2.6 2.3-2.6 2.3" stroke="#4a4a4a" fill="none" stroke-width="1"/></svg> <span style="color:#2020ff">static</span> Size</div>
<svg class="a" style="left:1424px;top:222px" width="13" height="12" viewBox="0 0 13 12"><circle cx="6.5" cy="6" r="4.8" fill="#f0d000" stroke="#000" stroke-width="1.1"/><path d="M6.5 3v6M3.5 6h6M4.4 3.9l4.2 4.2M8.6 3.9l-4.2 4.2" stroke="#e00000" stroke-width="0.9"/></svg>
<div class="t" style="left:1439px;top:220px;width:254px;overflow:hidden"><b>SplashCtrl</b><span style="color:#2020ff">()</span></div>
<svg class="a" style="left:1424px;top:239px" width="13" height="12" viewBox="0 0 13 12"><rect x="1.5" y="1.5" width="9.5" height="9.5" fill="#f0f000" stroke="#000" stroke-width="1.1"/></svg>
<div class="t" style="left:1439px;top:237px;width:254px;overflow:hidden"><b>ctrl</b> <svg width="10" height="7" style="vertical-align:1px"><path d="M0 3.5h9.5M7 1.2l2.6 2.3-2.6 2.3" stroke="#4a4a4a" fill="none" stroke-width="1"/></svg> Array<span style="color:#2020ff">&lt;</span>Ctrl<span style="color:#2020ff">&gt;</span></div>
</body></html>
